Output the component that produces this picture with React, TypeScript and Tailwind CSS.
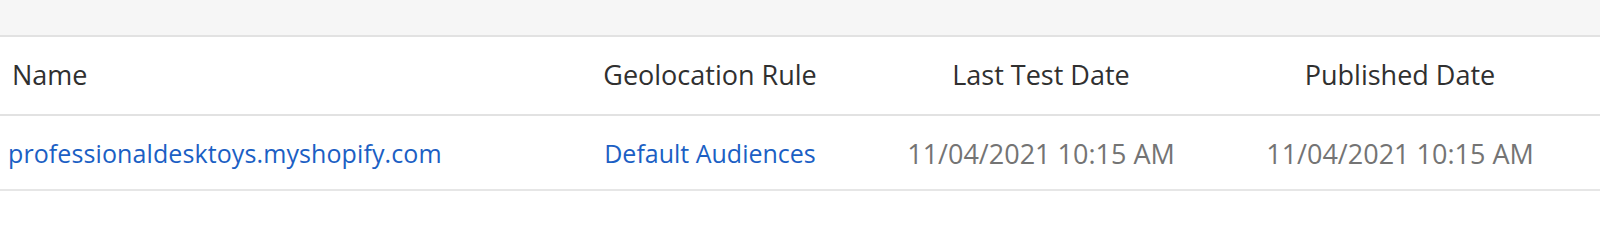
const columns = ["Name", "Geolocation Rule", "Last Test Date", "Published Date"];

const rows = [
  {
    name: "professionaldesktoys.myshopify.com",
    rule: "Default Audiences",
    lastTest: "11/04/2021 10:15 AM",
    published: "11/04/2021 10:15 AM",
  },
];

export default function App() {
  return (
    <div className="w-[1600px] h-[244px] bg-white font-['Open_Sans',sans-serif] overflow-hidden">
      {/* top toolbar strip */}
      <div className="h-[37px] bg-[#f6f6f6] border-b-[2px] border-[#e2e2e2]" />

      <div className="grid grid-cols-[560px_300px_362px_356px_1fr] h-[79px] items-center border-b-[2px] border-[#e2e2e2] text-[27px] text-[#303030]">
        <div className="pl-[12px]">{columns[0]}</div>
        <div className="text-center">{columns[1]}</div>
        <div className="text-center">{columns[2]}</div>
        <div className="text-center">{columns[3]}</div>
        <div />
      </div>

      {rows.map((r) => (
        <div
          key={r.name}
          className="grid grid-cols-[560px_300px_362px_356px_1fr] h-[75px] pt-[3px] items-center border-b-[2px] border-[#e6e6e6]"
        >
          <a className="pl-[8px] text-[25px] tracking-[0.1px] text-[#1b5fc4]">{r.name}</a>
          <a className="text-center text-[25px] text-[#1b5fc4]">{r.rule}</a>
          <div className="text-center text-[27px] text-[#747474]">{r.lastTest}</div>
          <div className="text-center text-[27px] text-[#747474]">{r.published}</div>
          <div />
        </div>
      ))}
    </div>
  );
}
